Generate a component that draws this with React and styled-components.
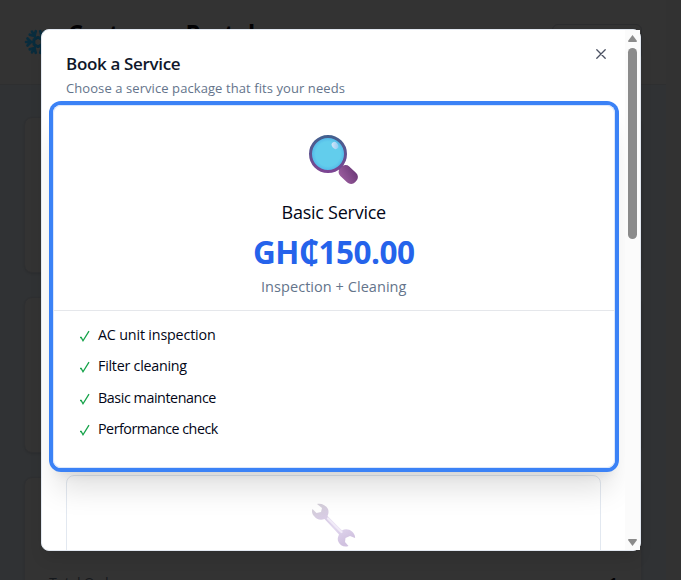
import React from "react";
import styled, { createGlobalStyle } from "styled-components";

const GlobalStyle = createGlobalStyle`
  * { box-sizing: border-box; }
  body { margin: 0; background: #2f3133; font-family: "Open Sans", "Noto Sans", sans-serif; overflow: hidden; }
  h1, h2, h3, p, ul { margin: 0; padding: 0; }
`;

const Viewport = styled.div`
  position: relative;
  width: 681px;
  height: 580px;
  overflow: hidden;
  display: flex;
  background: #303234;
`;

const Page = styled.div`
  width: 666px;
  height: 580px;
  overflow: hidden;
`;

const PageGutter = styled.div`
  width: 15px;
  height: 580px;
  background: #323232;
`;

const Header = styled.header`
  height: 85px;
  padding: 16px 24px 0 24px;
  display: flex;
  gap: 16px;
  background: #333;
  border-bottom: 1px solid #2e2f30;
  svg { margin-top: 12px; flex: none; }
`;

const PageTitle = styled.h1`
  flex: 1;
  font-size: 23.5px;
  line-height: 34px;
  font-weight: 700;
  letter-spacing: -0.35px;
  color: #020204;
`;

const HeaderButton = styled.div`
  width: 90px;
  height: 36px;
  margin-top: 8px;
  border: 1px solid #2b2c2e;
  border-radius: 6px;
`;

const StatList = styled.div`
  display: grid;
  gap: 24px;
  padding: 32px 24px;
`;

const StatCard = styled.div`
  height: 156px;
  border: 1px solid #2e2f31;
  border-radius: 8px;
  background: #333;
  box-shadow: 0 1px 2px rgba(0, 0, 0, 0.1);
`;

const StatHead = styled.div`
  display: flex;
  justify-content: space-between;
  padding: 95px 24px 0;
  font-size: 14px;
  line-height: 20px;
  letter-spacing: -0.2px;
  color: #15181c;
`;

const StatValue = styled.span`
  color: #020204;
  font-weight: 700;
`;

const Dialog = styled.section`
  position: absolute;
  z-index: 5;
  left: 41px;
  top: 29px;
  width: 600px;
  height: 522px;
  display: flex;
  border: 1px solid #e2e8f0;
  border-radius: 8px;
  background: #fff;
  box-shadow: 0 10px 15px -3px rgba(0, 0, 0, 0.1);
`;

const DialogBody = styled.div`
  width: 583px;
  height: 520px;
  padding: 23px 24px 0;
  overflow: hidden;
  border-radius: 7px 0 0 7px;
`;

const DialogTitle = styled.h2`
  font-size: 17px;
  line-height: 22px;
  font-weight: 600;
  letter-spacing: -0.33px;
  color: #0f172a;
  white-space: nowrap;
`;

const DialogText = styled.p`
  margin-top: 3px;
  font-size: 13px;
  line-height: 20px;
  letter-spacing: 0.08px;
  color: #64748b;
  white-space: nowrap;
`;

const CloseButton = styled.button`
  position: absolute;
  left: 551px;
  top: 16px;
  width: 16px;
  height: 16px;
  padding: 0;
  border: 0;
  background: none;
  display: grid;
  place-items: center;
`;

const Scrollbar = styled.div`
  width: 15px;
  height: 520px;
  padding: 5px 0 4px;
  display: flex;
  flex-direction: column;
  align-items: center;
  background: #fbfbfb;
`;

const Thumb = styled.div`
  width: 9px;
  height: 191px;
  margin-top: 6px;
  margin-bottom: auto;
  border-radius: 5px;
  background: #8b8b8b;
`;

const Arrow = styled.svg`
  display: block;
  width: 9px;
  height: 7px;
  transform: ${({ $down }) => ($down ? "rotate(180deg)" : "none")};
`;

const SelectedCard = styled.article`
  position: relative;
  z-index: 1;
  width: 561.5px;
  height: 363px;
  margin: 7px 0 0 -13px;
  border-radius: 8px;
  background: #fff;
  box-shadow: 0 0 0 4px #3b82f6, inset 0 0 0 1px #dbe7fb,
    0 24px 30px -4px rgba(0, 0, 0, 0.13), 0 10px 12px -4px rgba(0, 0, 0, 0.08);
`;

const OtherCard = styled.article`
  width: 535px;
  height: 345px;
  margin-top: 7px;
  padding-top: 24px;
  border: 1px solid #e2e8f0;
  border-radius: 8px;
  display: flex;
  justify-content: center;
`;

const CardHead = styled.div`
  height: 206px;
  padding-top: 27px;
  display: flex;
  flex-direction: column;
  align-items: center;
  border-bottom: 1px solid #e5e7eb;
  white-space: nowrap;
`;

const ServiceName = styled.h3`
  margin-top: 14px;
  font-size: 18px;
  line-height: 24px;
  font-weight: 500;
  letter-spacing: -0.25px;
  color: #020617;
`;

const Price = styled.p`
  margin-top: 9px;
  font-size: 31.5px;
  line-height: 38px;
  font-weight: 700;
  letter-spacing: -0.5px;
  color: #2563eb;
`;

const Summary = styled.p`
  margin-top: 6px;
  font-size: 14.5px;
  line-height: 20px;
  font-weight: 500;
  letter-spacing: 0.05px;
  color: #64748b;
`;

const Features = styled.ul`
  list-style: none;
  display: grid;
  gap: 10.4px;
  padding: 13px 26px 0;
`;

const Feature = styled.li`
  display: flex;
  align-items: center;
  gap: 7px;
  height: 21px;
  font-size: 14.3px;
  line-height: 21px;
  letter-spacing: ${({ $tracking }) => $tracking}px;
  color: #020617;
  white-space: nowrap;
  svg { margin-top: 4px; }
`;

const features = [
  ["AC unit inspection", -0.17],
  ["Filter cleaning", -0.25],
  ["Basic maintenance", -0.43],
  ["Performance check", -0.5],
];

function Snowflake() {
  return (
    <svg width="28" height="28" viewBox="-14 -14 28 28" fill="none" stroke="#092c3d" strokeWidth="2.6" strokeLinecap="round">
      {[0, 60, 120, 180, 240, 300].map((angle) => (
        <path key={angle} transform={`rotate(${angle})`} d="M4 0H12M7 0L10.500 -3.500M7 0L10.500 3.500M4 -2.300V2.300" />
      ))}
    </svg>
  );
}

function Magnifier() {
  return (
    <svg width="54" height="54" viewBox="0 0 54 54">
      <defs>
        <linearGradient id="rim" x1="0" y1="0" x2="0" y2="1">
          <stop offset="0" stopColor="#43608f" />
          <stop offset="1" stopColor="#7c4592" />
        </linearGradient>
        <radialGradient id="glass">
          <stop offset="0.7" stopColor="#62cdec" />
          <stop offset="1" stopColor="#4fb3e8" />
        </radialGradient>
        <linearGradient id="grip" x1="0.8" y1="0" x2="0.3" y2="1">
          <stop offset="0" stopColor="#6e3a79" />
          <stop offset="1" stopColor="#985b9c" />
        </linearGradient>
        <linearGradient id="shine" x1="0" y1="0" x2="1" y2="1">
          <stop offset="0" stopColor="#ddeafa" />
          <stop offset="1" stopColor="#8cc9f2" />
        </linearGradient>
      </defs>
      <path d="M32 34L36 38" stroke="#583363" strokeWidth="5" />
      <rect x="31" y="36" width="20.500" height="13" rx="5.5" transform="rotate(43 41.25 42.5)" fill="url(#grip)" />
      <circle cx="21" cy="22" r="17.5" fill="url(#glass)" stroke="url(#rim)" strokeWidth="3" />
      <ellipse cx="28" cy="13.5" rx="3" ry="3.7" transform="rotate(-38 28 13.5)" fill="url(#shine)" />
    </svg>
  );
}

function WrenchArt() {
  return (
    <svg width="54" height="54" viewBox="0 0 54 54">
      <defs>
        <linearGradient id="steel" x1="0" y1="0" x2="0.6" y2="1">
          <stop offset="0" stopColor="#d4d1d7" />
          <stop offset="0.35" stopColor="#d8cce4" />
          <stop offset="0.65" stopColor="#e2d8ef" />
          <stop offset="1" stopColor="#d1c2e0" />
        </linearGradient>
      </defs>
      <path
        fill="url(#steel)"
        d="M10 4C14 3 19 5 21 9C22 12 21.500 14 20.500 16L35 30.500C38 28.500 42 29 45 31.500C47 33.500 48.500 36 48 38L43 36L38.500 38L38 42L41.500 46C37 47.500 33 45.500 31.500 42C30 39 31 37 32 34.500L17.500 19C14 20.500 9 19.500 7 16C5 14 4.500 11 5.500 9L9.500 13L14 12L15 8Z"
      />
      <path d="M21 18.500L34.500 32" stroke="#f1ebf8" strokeWidth="2.4" strokeLinecap="round" />
    </svg>
  );
}

function Check() {
  return (
    <svg width="12" height="13" viewBox="0 0 12 13" fill="none" stroke="#16a34a" strokeWidth="1.3">
      <path d="M1 7.500L2.200 7.500L4 10.800L10 1.200" />
    </svg>
  );
}

export default function App() {
  return (
    <>
      <GlobalStyle />
      <Viewport>
        <Page>
          <Header>
            <Snowflake />
            <PageTitle>Customer Portal</PageTitle>
            <HeaderButton />
          </Header>
          <StatList>
            <StatCard />
            <StatCard />
            <StatCard>
              <StatHead>
                <span>Total Orders</span>
                <StatValue>1</StatValue>
              </StatHead>
            </StatCard>
          </StatList>
        </Page>
        <PageGutter />
        <Dialog role="dialog" aria-label="Book a Service">
          <DialogBody>
            <DialogTitle>Book a Service</DialogTitle>
            <DialogText>Choose a service package that fits your needs</DialogText>
            <SelectedCard>
              <CardHead>
                <Magnifier />
                <ServiceName>Basic Service</ServiceName>
                <Price>GH₵150.00</Price>
                <Summary>Inspection + Cleaning</Summary>
              </CardHead>
              <Features>
                {features.map(([label, tracking]) => (
                  <Feature key={label} $tracking={tracking}>
                    <Check />
                    {label}
                  </Feature>
                ))}
              </Features>
            </SelectedCard>
            <OtherCard>
              <WrenchArt />
            </OtherCard>
          </DialogBody>
          <Scrollbar>
            <Arrow viewBox="0 0 9 7"><path d="M4.500 0L9 6Q9 7 8 7H1Q0 7 0 6Z" fill="#8b8b8b" /></Arrow>
            <Thumb />
            <Arrow $down viewBox="0 0 9 7"><path d="M4.500 0L9 6Q9 7 8 7H1Q0 7 0 6Z" fill="#8b8b8b" /></Arrow>
          </Scrollbar>
          <CloseButton aria-label="Close">
            <svg width="10" height="10" viewBox="0 0 10 10" stroke="#4b5162" strokeWidth="1.3" strokeLinecap="round">
              <path d="M0.800 0.800L9.200 9.200M9.200 0.800L0.800 9.200" />
            </svg>
          </CloseButton>
        </Dialog>
      </Viewport>
    </>
  );
}
